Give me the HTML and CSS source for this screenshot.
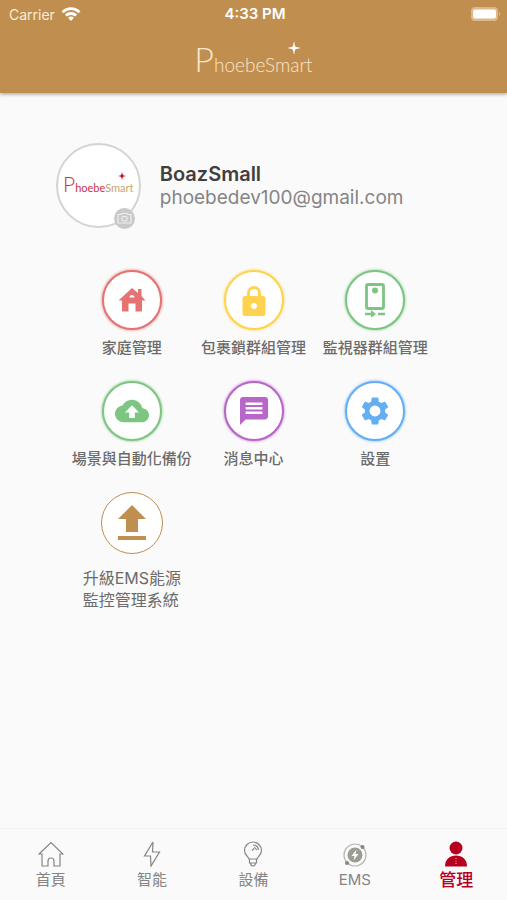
FILE: index.html
```html
<!DOCTYPE html>
<html lang="zh-Hant">
<head>
<meta charset="utf-8">
<meta name="viewport" content="width=device-width, initial-scale=1">
<title>PhoebeSmart</title>
<link rel="stylesheet" href="styles.css">
</head>
<body>
<header class="top">
  <div class="status">
    <div class="carrier">Carrier
      <svg width="20" height="16" viewBox="0 0 20 16" fill="none" stroke="#fff" stroke-width="2.8"><path d="M1.5 6.2C6.3 1.5 13.7 1.5 18.500 6.200"/><path d="M4.800 9.600C7.700 6.800 12.300 6.800 15.200 9.600"/><path d="M7 11.800Q10 9.400 13 11.800L10 15Z" fill="#fff" stroke="none"/></svg>
    </div>
    <div class="time">4:33 PM</div>
    <div class="battery"><svg width="30" height="15" viewBox="0 0 30 15"><rect x="0" y="0" width="27" height="14" rx="4" fill="#dcb98b"/><rect x="2" y="2.500" width="23" height="9" rx="2" fill="#fff"/><path d="M28 5q2 2 0 4z" fill="#e4c9a4"/></svg></div>
  </div>
  <div class="brand">
    <div class="logo"><span class="logo-p">P</span>hoebe<span class="logo-s">Smart</span><svg class="star" viewBox="0 0 14 14"><path d="M7 0L8.200 5.800L14 7L8.200 8.200L7 14L5.800 8.200L0 7L5.800 5.800Z"/><circle cx="7" cy="7" r="2"/></svg></div>
  </div>
</header>
<main>
  <section class="profile">
    <button class="avatar" aria-label="更換頭像">
      <span class="logo logo-small"><span class="logo-p">P</span>hoebe<span class="logo-s">Smart</span><svg class="star" viewBox="0 0 14 14"><path d="M7 0L8.500 5.500L14 7L8.500 8.500L7 14L5.500 8.500L0 7L5.500 5.500Z"/><circle cx="7" cy="7" r="2.500"/></svg></span>
      <span class="camera"><svg width="15" height="13" viewBox="0 0 15 13" fill="none" stroke="#eee" stroke-width="1.200"><path d="M1 2.500h3l1-1h5l1 1h3v8.500H1z"/><rect x="5" y="4.500" width="5" height="4.500" rx="1.500"/></svg></span>
    </button>
    <div class="identity">
      <h1>BoazSmall</h1>
      <p>phoebedev100@gmail.com</p>
    </div>
  </section>
  <section class="menu">
    <button class="tile red"><span class="disc"><svg viewBox="0 0 28 28"><path fill-rule="evenodd" d="M14 2L20 7V3h3.500v7l4 4.500H24V24.500q0 1-1 1h-5.500v-8h-7v8H5q-1 0-1-1V14.500H.5zM11.500 11.500h5q0-2.500-2.500-2.500t-2.500 2.500z"/></svg></span><span>家庭管理</span></button>
    <button class="tile yellow"><span class="disc"><svg viewBox="0 0 24 31"><path fill-rule="evenodd" d="M3 11H5V8a7 7 0 0 1 14 0v3h2q2.500 0 2.500 2.500v15Q23.500 31 21 31H3Q.5 31 .5 28.500v-15Q.5 11 3 11zM8 11h8V8a4 4 0 0 0-8 0zM12 18a3 3 0 1 0 .01 0z"/></svg></span><span>包裹鎖群組管理</span></button>
    <button class="tile green"><span class="disc"><svg class="tall" viewBox="0 0 22 34"><rect x="2.500" y="1.500" width="17" height="24" rx="1.500" fill="none" stroke="currentColor" stroke-width="2.800"/><circle cx="11" cy="7.500" r="3"/><path d="M1 29.700h6V27l5 4-5 4v-2.700H1zM14 29.700h7v2.600h-7z"/></svg></span><span>監視器群組管理</span></button>
    <button class="tile green"><span class="disc"><svg class="wide" viewBox="0 0 24 24"><path d="M19.350 10.040C18.670 6.590 15.640 4 12 4 9.110 4 6.600 5.640 5.350 8.040 2.340 8.360 0 10.910 0 14c0 3.310 2.690 6 6 6h13c2.760 0 5-2.240 5-5 0-2.640-2.050-4.780-4.650-4.960zM14 13v4h-4v-4H7l5-5 5 5h-3z"/></svg></span><span>場景與自動化備份</span></button>
    <button class="tile purple"><span class="disc"><svg viewBox="2 2 20 20"><path d="M20 2H4c-1.100 0-2 .9-2 2v18l4-4h14c1.100 0 2-.9 2-2V4c0-1.100-.9-2-2-2zM6 6h12v1.700H6zm0 3.200h12V11H6zm0 3.200h12v1.700H6z"/></svg></span><span>消息中心</span></button>
    <button class="tile blue"><span class="disc"><svg viewBox="2 2 20 20"><path d="M19.140 12.940c.04-.3.060-.61.060-.94 0-.32-.02-.64-.07-.94l2.030-1.580c.18-.14.230-.41.120-.61l-1.920-3.320c-.12-.22-.37-.29-.59-.22l-2.390.96c-.5-.38-1.030-.7-1.620-.94l-.36-2.540c-.04-.24-.24-.41-.48-.41h-3.840c-.24 0-.43.17-.47.41l-.36 2.540c-.59.24-1.130.57-1.620.94l-2.390-.96c-.22-.08-.47 0-.59.22L2.740 8.870c-.12.210-.08.470.12.610l2.030 1.580c-.05.3-.09.630-.09.940s.02.640.07.940l-2.030 1.580c-.18.140-.23.410-.12.610l1.920 3.320c.12.220.37.290.59.220l2.390-.96c.5.380 1.030.7 1.620.94l.36 2.540c.05.240.24.410.48.410h3.840c.24 0 .44-.17.470-.41l.36-2.540c.59-.24 1.130-.56 1.620-.94l2.390.96c.22.080.47 0 .59-.22l1.920-3.320c.12-.22.070-.47-.12-.61l-2.010-1.580zM12 15.900A3.900 3.900 0 1 1 12 8.100a3.900 3.900 0 0 1 0 7.800z"/></svg></span><span>設置</span></button>
    <button class="tile gold"><span class="disc"><svg class="upload" viewBox="0 0 30 36"><path d="M15 0L29 14H21V27H9V14H1zM1 31h28v4H1z"/></svg></span><span class="two-line">升級EMS能源<br>監控管理系統</span></button>
  </section>
</main>
<nav class="tabs">
  <a href="#home"><svg viewBox="0 0 26 26"><path d="M1 13L13 1.500 25 13H22V25H16V20q0-3-3-3t-3 3v5H4V13z"/></svg><span>首頁</span></a>
  <a href="#smart"><svg viewBox="0 0 26 26"><path d="M14 1L5.500 15h6L12 25l8.500-14h-7z"/></svg><span>智能</span></a>
  <a href="#devices"><svg viewBox="0 0 26 26"><path d="M9 18C8.500 16 4.500 14 4.500 9.500a8.500 8.500 0 0 1 17 0c0 4.500-4 6.500-4.500 8.500zM9.500 18v4h7v-4M10.500 22q0 3 2.500 3t2.500-3"/><path d="M12 9.500l2-2M13 4q5 0 5.500 5M14 6.500q2 .5 2.500 2.500"/></svg><span>設備</span></a>
  <a href="#ems"><svg class="ems" viewBox="0 0 26 26"><circle cx="13" cy="14" r="11" stroke="#b8b8b2"/><circle cx="13" cy="14" r="7.500" fill="#9c9c95" stroke="none"/><circle cx="20.500" cy="6" r="2" fill="#858580" stroke="none"/><circle cx="5" cy="22" r="2" fill="#858580" stroke="none"/><path d="M14.500 8.500L9.500 15H12.500L11.500 19.500L16.500 13H13.500z" fill="#fff" stroke="none"/></svg><span>EMS</span></a>
  <a href="#manage" class="active" aria-current="page"><svg viewBox="0 0 26 26"><circle cx="13" cy="7" r="6.500"/><path d="M2 25.500C2 18 7 14.500 13 14.500S24 18 24 25.500z"/><path d="M13 17v6" stroke="#e8a3ac" stroke-dasharray="1 1.500"/></svg><span>管理</span></a>
</nav>
</body>
</html>
```
FILE: styles.css
```css
* { box-sizing: border-box; }
body {
  margin: 0;
  min-height: 100vh;
  display: flex;
  flex-direction: column;
  background: #fafafa;
  color: #666;
  font-family: Inter, "Noto Sans CJK TC", sans-serif;
}
button {
  padding: 0;
  border: 0;
  background: none;
  color: inherit;
  font: inherit;
}
svg { display: block; fill: currentColor; }
.top {
  background: #c08e4e;
  color: #fff;
  box-shadow: 0 1px 4px rgba(0, 0, 0, .4);
}
.status {
  display: grid;
  grid-template-columns: 1fr auto 1fr;
  align-items: center;
  height: 28px;
  padding: 0 6px 0 9px;
  font-size: 14px;
}
.carrier { display: flex; align-items: center; gap: 6px; color: #faecd8; }
.carrier svg { fill: none; }
.time { font-size: 15px; font-weight: 600; line-height: 28px; }
.battery { display: flex; justify-content: flex-end; }
.brand {
  display: flex;
  justify-content: center;
  align-items: flex-end;
  height: 65px;
  padding-bottom: 10px;
}
.logo {
  position: relative;
  display: block;
  color: #fbe6cb;
  font-family: Lato, sans-serif;
  font-weight: 300;
  font-size: 19px;
  line-height: 36px;
  white-space: nowrap;
}
.logo-p { font-size: 34px; }
.star { position: absolute; top: 0; right: 12px; width: 14px; height: 14px; color: #fff; }
main { flex: 1; padding: 50px 0 24px; }
.profile {
  display: flex;
  align-items: center;
  gap: 19px;
  padding: 0 11%;
}
.avatar {
  position: relative;
  display: flex;
  align-items: center;
  justify-content: center;
  flex: none;
  width: 85px;
  height: 85px;
  border: 2px solid #d4d4d4;
  border-radius: 50%;
  background: #fff;
}
.logo-small { color: #c8324b; font-size: 11px; line-height: 24px; font-weight: 400; }
.logo-small .logo-p { font-size: 21px; font-weight: 300; }
.logo-small .logo-s { color: #c6a36d; }
.logo-small .star { right: 7px; width: 8px; height: 8px; color: #c01030; }
.camera {
  position: absolute;
  right: 4px;
  bottom: -3px;
  display: flex;
  align-items: center;
  justify-content: center;
  width: 21px;
  height: 21px;
  border-radius: 50%;
  background: #c9c9c9;
}
.camera svg { fill: none; }
h1, p { margin: 0; line-height: 24px; }
h1 { color: #3f3f3f; font-size: 20px; font-weight: 600; }
p { color: #858585; font-size: 19px; }
.menu {
  display: grid;
  grid-template-columns: repeat(3, 1fr);
  row-gap: 22px;
  padding: 42px 14% 0;
}
.tile {
  display: flex;
  flex-direction: column;
  align-items: center;
  gap: 7px;
  font-size: 15px;
  font-weight: 500;
  line-height: 22px;
  white-space: nowrap;
}
.tile > span:last-child { color: #6b6b6b; }
.disc {
  display: flex;
  align-items: center;
  justify-content: center;
  width: 60px;
  height: 60px;
  border: 2px solid currentColor;
  border-radius: 50%;
  background: #fff;
  box-shadow: 0 0 3px currentColor;
}
.disc svg { width: 28px; height: 28px; }
.disc .tall { width: 22px; height: 34px; }
.disc .wide { width: 34px; height: 34px; }
.disc .upload { width: 30px; height: 36px; }
.yellow .disc svg { height: 31px; }
.red { color: #e57373; }
.yellow { color: #ffd34f; }
.green { color: #7dc681; }
.purple { color: #b866c7; }
.blue { color: #64aff3; }
.gold { gap: 13px; color: #c08e4e; font-size: 16px; font-weight: 400; text-align: left; }
.gold .disc { width: 62px; height: 62px; border-width: 1px; box-shadow: none; }
.tabs {
  display: grid;
  grid-template-columns: repeat(5, 1fr);
  height: 72px;
  border-top: 1px solid #f3f3f3;
}
.tabs a {
  display: flex;
  flex-direction: column;
  align-items: center;
  padding-top: 12px;
  color: #858585;
  font-size: 15px;
  line-height: 26px;
  text-decoration: none;
}
.tabs svg { width: 26px; height: 26px; fill: none; stroke: currentColor; stroke-width: 1.2; }
.tabs .active { color: #b5001e; font-size: 17px; font-weight: 500; }
.tabs .active svg { fill: currentColor; stroke: none; }
```
